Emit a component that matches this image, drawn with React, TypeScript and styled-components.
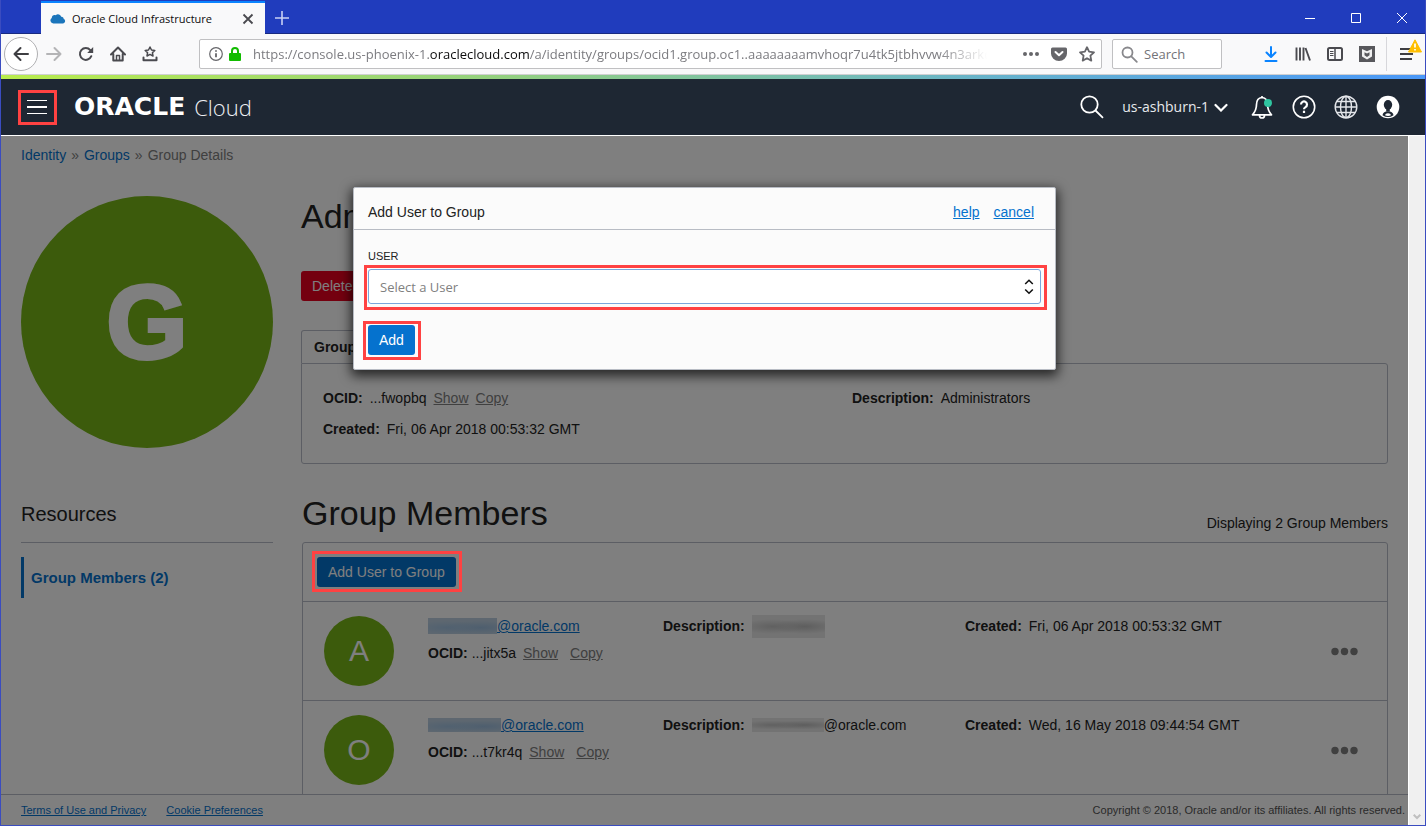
import React from "react";
import styled, { createGlobalStyle, css } from "styled-components";

const ui = `"Open Sans", "Noto Sans", sans-serif`;
const arial = `"Liberation Sans", Arial, sans-serif`;

const GlobalStyle = createGlobalStyle`
  *, *::before, *::after { box-sizing: border-box; }
  body { margin: 0; font: 14px/20px ${arial}; color: #222; background: #fff; }
  button, input, select { font: inherit; color: inherit; margin: 0; }
  svg { display: block; flex: none; }
`;

/* ---------- window ---------- */
const Window = styled.div`
  display: flex;
  flex-direction: column;
  height: 100vh;
  border: solid #3a4cc0;
  border-width: 0 1px 1px;
  overflow: hidden;
`;

const TitleBar = styled.div`
  display: flex;
  height: 34px;
  padding: 1px 0 0 40px;
  background: #203cbd;
  box-shadow: inset 0 -1px #182a80;
  flex: none;
`;

const Tab = styled.div`
  display: flex;
  align-items: center;
  gap: 6px;
  width: 224px;
  padding: 0 10px 0 9px;
  border-top: 2px solid #0a84ff;
  background: #f9f9fa;
  color: #0c0c0d;
  font: 11px/16px ${ui};
`;

const TabTitle = styled.span`
  flex: 1;
  white-space: nowrap;
`;

const BareButton = styled.button`
  display: flex;
  align-items: center;
  justify-content: center;
  padding: 0;
  border: 0;
  background: none;
  color: inherit;
`;

const NewTab = styled(BareButton)`
  width: 34px;
`;

const WindowButtons = styled.div`
  display: flex;
  margin-left: auto;
`;

const WindowButton = styled(BareButton)`
  width: 46px;
`;

const NavBar = styled.div`
  display: flex;
  align-items: center;
  height: 41px;
  padding: 0 3px;
  border-bottom: 1px solid #d0d0d2;
  background: #f9f9fa;
  color: #4a4a4f;
  flex: none;
`;

const NavButton = styled(BareButton)`
  width: 32px;
  height: 32px;
`;

const BackButton = styled(BareButton)`
  width: 34px;
  height: 34px;
  border: 1px solid #b0b0b2;
  border-radius: 50%;
  background: #fff;
`;

const Field = styled.div`
  display: flex;
  align-items: center;
  height: 30px;
  border: 1px solid #c0c0c2;
  border-radius: 2px;
  background: #fff;
  font: 13px/20px ${ui};
`;

const UrlField = styled(Field)`
  flex: 1;
  min-width: 0;
  gap: 6px;
  margin: 0 10px 0 33px;
  padding: 0 6px 0 9px;
`;

const Url = styled.div`
  flex: 1;
  min-width: 0;
  margin: 0 30px 0 6px;
  overflow: hidden;
  white-space: nowrap;
  color: #7c7c80;
  mask-image: linear-gradient(to right, #000 calc(100% - 50px), transparent);
  b { font-weight: 400; color: #0c0c0d; }
`;

const UrlActions = styled.div`
  display: flex;
  align-items: center;
  gap: 12px;
  color: #66666a;
`;

const SearchField = styled(Field)`
  width: 110px;
  gap: 6px;
  margin-right: 33px;
  padding: 0 8px;
  color: #737378;
`;

const SearchInput = styled.input`
  width: 100%;
  min-width: 0;
  padding: 0;
  border: 0;
  outline: 0;
  background: none;
  &::placeholder { color: #737378; opacity: 1; }
`;

const MenuSlot = styled.div`
  position: relative;
  display: flex;
  align-items: center;
  justify-content: center;
  width: 36px;
  height: 34px;
  margin-left: 3px;
  padding-left: 3px;
  border-left: 1px solid #d7d7db;
`;

const MenuBadge = styled.span`
  position: absolute;
  top: 2px;
  right: 0;
`;

/* ---------- console header ---------- */
const Stripe = styled.div`
  height: 4px;
  background: linear-gradient(to right, #b9ec4d, #93d07f 35%, #66b2cc 70%, #4a98f8);
  flex: none;
`;

const Header = styled.header`
  display: flex;
  align-items: center;
  height: 57px;
  padding: 0 25px 0 20px;
  border-bottom: 1px solid #fff;
  background: #1e2733;
  color: #fff;
  flex: none;
`;

const Marked = styled.div`
  position: relative;
  display: flex;
`;

const Mark = styled.span<{ $inset: string }>`
  position: absolute;
  z-index: 3;
  inset: ${(p) => p.$inset};
  border: 3px solid #ff4242;
  pointer-events: none;
`;

const MenuButton = styled(BareButton)`
  width: 33px;
  height: 29px;
`;

const Logo = styled.a`
  display: flex;
  align-items: center;
  gap: 9px;
  margin-left: 20px;
  color: #fff;
  text-decoration: none;
  line-height: 28px;
`;

const LogoStrong = styled.span`
  font-family: "DejaVu Sans", sans-serif;
  font-weight: 700;
  font-size: 25px;
`;

const LogoLight = styled.span`
  font-family: ${ui};
  font-weight: 300;
  font-size: 22px;
  color: #eef0f3;
`;

const HeaderTools = styled.div`
  display: flex;
  align-items: center;
  gap: 18px;
  margin-left: auto;
`;

const Region = styled(BareButton)`
  gap: 5px;
  margin-right: 4px;
  padding-bottom: 1px;
  font: 14px/20px ${ui};
  color: #e8eaed;
`;

/* ---------- page ---------- */
const Viewport = styled.div`
  display: flex;
  flex: 1;
  min-height: 0;
`;

const Screen = styled.div`
  position: relative;
  display: flex;
  flex-direction: column;
  flex: 1;
  min-width: 0;
`;

const Scrollbar = styled.div`
  display: flex;
  align-items: flex-end;
  justify-content: center;
  width: 17px;
  padding-bottom: 5px;
  border-left: 1px solid #fff;
  background: #f0f0f0;
`;

const Page = styled.div`
  flex: 1;
  min-height: 0;
  padding: 9px 20px 0;
  overflow: hidden;
`;

const Link = styled.a<{ $muted?: boolean }>`
  color: ${(p) => (p.$muted ? "#808080" : "#0572ce")};
`;

const Crumbs = styled.nav`
  display: flex;
  gap: 5px;
  color: #808080;
  a { text-decoration: none; }
`;

const Columns = styled.div`
  display: flex;
  gap: 28px;
  padding-top: 31px;
`;

const Side = styled.aside`
  width: 252px;
  flex: none;
`;

const Avatar = styled.div<{ $large?: boolean }>`
  display: flex;
  align-items: center;
  justify-content: center;
  border-radius: 50%;
  background: #78b618;
  color: #fff;
  ${(p) =>
    p.$large
      ? css`
          width: 252px;
          height: 252px;
          font: 700 104px/104px ${arial};
          -webkit-text-stroke: 4px #fff;
        `
      : css`
          width: 70px;
          height: 70px;
          font-size: 30px;
          line-height: 32px;
        `}
`;

const SideTitle = styled.h3`
  margin: 54px 0 0;
  padding-bottom: 16px;
  border-bottom: 1px solid #b8bcc8;
  font-weight: 400;
  font-size: 20px;
  line-height: 24px;
`;

const SideItem = styled.a`
  display: block;
  margin-top: 14px;
  padding: 10px 7px;
  border-left: 3px solid #0572ce;
  color: #0572ce;
  font-weight: 700;
  font-size: 15px;
  line-height: 21px;
  text-decoration: none;
`;

const Main = styled.main`
  flex: 1;
  min-width: 0;
`;

const Title = styled.h1`
  margin: 0;
  font-weight: 400;
  font-size: 34px;
  line-height: 40px;
`;

const Button = styled.button<{ $danger?: boolean }>`
  height: 30px;
  padding: 0 11px;
  border: 0;
  border-radius: 3px;
  background: ${(p) => (p.$danger ? "#e8001f" : "#0572ce")};
  color: #fff;
  line-height: 20px;
`;

const Actions = styled.div`
  display: flex;
  padding: 35px 0 29px;
`;

const InfoTab = styled.div`
  width: 150px;
  height: 33px;
  padding: 6px 12px;
  border: 1px solid #b8bcc8;
  border-bottom: 0;
  border-radius: 3px 3px 0 0;
  font-weight: 700;
`;

const InfoBox = styled.dl`
  display: grid;
  grid-template-columns: 1fr 1fr;
  gap: 11px 0;
  margin: 0;
  padding: 24px 6px 24px 21px;
  border: 1px solid #b8bcc8;
  border-radius: 0 3px 3px 3px;
`;

const Pair = styled.div`
  display: flex;
  gap: 7px;
  white-space: nowrap;
  dt { font-weight: 700; }
  dd { display: flex; gap: 7px; margin: 0; }
`;

const Members = styled.section`
  padding: 29px 0 0 1px;
`;

const MembersHead = styled.div`
  display: flex;
  align-items: flex-end;
  justify-content: space-between;
  padding-bottom: 9px;
`;

const MemberList = styled.div`
  border: 1px solid #b8bcc8;
  border-radius: 3px;
`;

const Toolbar = styled.div`
  display: flex;
  padding: 14px;
`;

const Row = styled.article`
  display: grid;
  grid-template-columns: 70px 201fr 268fr 332fr auto;
  gap: 34px;
  padding: 14px 29px 14px 21px;
  border-top: 1px solid #b8bcc8;
  white-space: nowrap;
`;

const Cell = styled.div`
  display: flex;
  flex-direction: column;
  gap: 7px;
  b { font-weight: 700; }
`;

const Line = styled.div<{ $wide?: boolean }>`
  display: flex;
  gap: ${(p) => (p.$wide ? 7 : 4)}px;
`;

const Email = styled.div`
  display: flex;
  align-items: center;
  height: 20px;
`;

const Smudge = styled.span<{ $w: number; $h: number; $gray?: boolean }>`
  display: block;
  width: ${(p) => p.$w}px;
  height: ${(p) => p.$h}px;
  background: ${(p) =>
    p.$gray
      ? css`radial-gradient(ellipse at 28% 50%, #c2c2c2, transparent 45%), radial-gradient(ellipse at 72% 50%, #bcbcbc, transparent 45%), #e6e6e6`
      : css`radial-gradient(ellipse at 28% 60%, #a2c2e0, transparent 50%), radial-gradient(ellipse at 76% 60%, #9cbddd, transparent 50%), #bccfe0`};
`;

const OcidLinks = styled.span`
  display: flex;
  gap: 12px;
  margin-left: 3px;
`;

const MoreButton = styled(BareButton)`
  align-self: center;
`;

const Footer = styled.footer`
  display: flex;
  gap: 20px;
  padding: 5px 3px 5px 20px;
  border-top: 1px solid #b8bcc8;
  font-size: 11px;
  line-height: 20px;
  color: #555;
  span { margin-left: auto; }
`;

/* ---------- dialog ---------- */
const Backdrop = styled.div`
  position: absolute;
  inset: 0;
  z-index: 2;
  display: flex;
  justify-content: center;
  align-items: flex-start;
  padding-top: 51px;
  background: rgba(0, 0, 0, 0.5);
`;

const Dialog = styled.section`
  width: 703px;
  border: 1px solid #b8bcc4;
  border-radius: 2px;
  background: #fbfbfb;
  box-shadow: 0 4px 12px 2px rgba(0, 0, 0, 0.7);
`;

const DialogHead = styled.div`
  display: flex;
  gap: 14px;
  padding: 14px 21px 7px 14px;
  border-bottom: 1px solid #b8bcc4;
  h2 { flex: 1; margin: 0; font-size: 14px; font-weight: 400; }
`;

const DialogBody = styled.form`
  padding: 18px 14px 14px;
`;

const Label = styled.label`
  display: block;
  margin-bottom: 5px;
  font-size: 11px;
  line-height: 16px;
`;

const SelectWrap = styled(Marked)`
  margin-bottom: 21px;
`;

const Select = styled.select`
  appearance: none;
  width: 100%;
  height: 35px;
  padding: 0 11px;
  border: 1px solid #7aa7dc;
  border-radius: 3px;
  background: #fff;
  color: #808080;
  font: 13px/20px ${ui};
`;

const SelectArrow = styled.svg`
  position: absolute;
  top: 10px;
  right: 7px;
  pointer-events: none;
`;

const AddRow = styled.div`
  display: flex;
`;

const Dots = () => (
  <svg width="27" height="9" viewBox="0 0 27 9" fill="#808080">
    <circle cx="4" cy="4.500" r="3.700" />
    <circle cx="13.500" cy="4.500" r="3.700" />
    <circle cx="23" cy="4.500" r="3.700" />
  </svg>
);

type Member = {
  letter: string;
  mask: [number, number];
  descMask: [number, number];
  desc: string;
  ocid: string;
  created: string;
};

const members: Member[] = [
  { letter: "A", mask: [69, 16], descMask: [73, 23], desc: "", ocid: "...jitx5a", created: "Fri, 06 Apr 2018 00:53:32 GMT" },
  { letter: "O", mask: [73, 14], descMask: [72, 14], desc: "@oracle.com", ocid: "...t7kr4q", created: "Wed, 16 May 2018 09:44:54 GMT" },
];

export default function App() {
  return (
    <Window>
      <GlobalStyle />
      <TitleBar>
        <Tab>
          <svg width="16" height="16" viewBox="0 0 16 16">
            <path d="M3.300 12.500a3 3 0 0 1-1.500-5.500C1.600 5 3.600 3.300 5.700 4.200 7.500 2.600 10.500 3.300 11.200 5.800c1.500-.2 2.400.9 2.500 2.100 2 .6 2 4.200-.6 4.600z" fill="#1b75bb" />
          </svg>
          <TabTitle>Oracle Cloud Infrastructure</TabTitle>
          <BareButton aria-label="Close tab">
            <svg width="14" height="14" viewBox="0 0 14 14" stroke="#4a4a4f" strokeWidth="1.800">
              <path d="M2.500 2.500l9 9M11.500 2.500l-9 9" />
            </svg>
          </BareButton>
        </Tab>
        <NewTab aria-label="New tab">
          <svg width="14" height="14" viewBox="0 0 14 14" stroke="#c8d0f4" strokeWidth="1.600">
            <path d="M7 0v14M0 7h14" />
          </svg>
        </NewTab>
        <WindowButtons>
          <WindowButton aria-label="Minimize">
            <svg width="10" height="10" stroke="#fff"><path d="M0 5.500h10" /></svg>
          </WindowButton>
          <WindowButton aria-label="Maximize">
            <svg width="10" height="10" stroke="#fff" fill="none"><path d="M.5 .5h9v9h-9z" /></svg>
          </WindowButton>
          <WindowButton aria-label="Close window">
            <svg width="10" height="10" stroke="#fff"><path d="M0 0l10 10M10 0L0 10" /></svg>
          </WindowButton>
        </WindowButtons>
      </TitleBar>

      <NavBar>
        <BackButton aria-label="Back">
          <svg width="16" height="16" viewBox="0 0 16 16" fill="none" stroke="#3e3e42" strokeWidth="2" strokeLinecap="round" strokeLinejoin="round">
            <path d="M15 8H1.500M7.500 2L1.500 8l6 6" />
          </svg>
        </BackButton>
        <NavButton aria-label="Forward">
          <svg width="16" height="16" viewBox="0 0 16 16" fill="none" stroke="#b4b4b6" strokeWidth="2" strokeLinecap="round" strokeLinejoin="round">
            <path d="M1 8h13.500M8.500 2l6 6-6 6" />
          </svg>
        </NavButton>
        <NavButton aria-label="Reload">
          <svg width="16" height="16" viewBox="0 0 16 16">
            <path d="M13.300 10.200A5.900 5.900 0 1 1 12.300 4.100" fill="none" stroke="#4a4a4f" strokeWidth="2" strokeLinecap="round" />
            <path d="M15.200 1v6H9.200z" fill="#4a4a4f" />
          </svg>
        </NavButton>
        <NavButton aria-label="Home">
          <svg width="16" height="16" viewBox="0 0 16 16" fill="none" stroke="#4a4a4f" strokeWidth="2" strokeLinecap="round" strokeLinejoin="round">
            <path d="M1 8.500L8 1.500l7 7M3.300 8v6.500h9.400V8" />
            <path d="M6.500 14V9.500h3V14" strokeWidth="1.500" />
          </svg>
        </NavButton>
        <NavButton aria-label="Bookmarks">
          <svg width="16" height="16" viewBox="0 0 16 16" fill="none" stroke="#4a4a4f" strokeLinejoin="round" strokeLinecap="round">
            <path d="M8 1l1.500 3 3.300.4-2.400 2.300.6 3.300-3-1.600-3 1.600.6-3.300L3.200 4.400 6.500 4z" strokeWidth="1.500" />
            <path d="M1.500 11.500v2.700h13v-2.700" strokeWidth="2" />
          </svg>
        </NavButton>
        <UrlField>
          <svg width="14" height="14" viewBox="0 0 14 14" fill="none" stroke="#66666a">
            <circle cx="7" cy="7" r="6.300" strokeWidth="1.200" />
            <path d="M7 6.200v4M7 3.300v1.500" strokeWidth="1.800" />
          </svg>
          <svg width="12" height="14" viewBox="0 0 12 14">
            <rect x="0" y="6" width="12" height="8" rx="1" fill="#12bc00" />
            <path d="M3 7V4a3 3 0 0 1 6 0v3" fill="none" stroke="#12bc00" strokeWidth="2" />
          </svg>
          <Url role="textbox" aria-label="Address" tabIndex={0}>
            https://console.us-phoenix-1.<b>oraclecloud.com</b>/a/identity/groups/ocid1.group.oc1..aaaaaaaamvhoqr7u4tk5jtbhvvw4n3arkq
          </Url>
          <UrlActions>
            <BareButton aria-label="Page actions">
              <svg width="16" height="16" viewBox="0 0 16 16" fill="#66666a">
                <circle cx="2" cy="8" r="2" /><circle cx="8" cy="8" r="2" /><circle cx="14" cy="8" r="2" />
              </svg>
            </BareButton>
            <BareButton aria-label="Save to Pocket">
              <svg width="16" height="16" viewBox="0 0 16 16">
                <path d="M1.500 1.500h13A1.500 1.500 0 0 1 16 3v4.500a8 7.500 0 0 1-16 0V3a1.500 1.500 0 0 1 1.500-1.500z" fill="#66666a" />
                <path d="M4.500 6L8 9.300 11.500 6" fill="none" stroke="#fff" strokeWidth="2" strokeLinecap="round" strokeLinejoin="round" />
              </svg>
            </BareButton>
            <BareButton aria-label="Bookmark this page">
              <svg width="16" height="16" viewBox="0 0 16 16" fill="none" stroke="#66666a" strokeWidth="1.800" strokeLinejoin="round">
                <path d="M8 1.200l2.100 4.500 4.900.6-3.600 3.400.9 4.900L8 12.200l-4.300 2.400.9-4.900L1 6.300l4.900-.6z" />
              </svg>
            </BareButton>
          </UrlActions>
        </UrlField>
        <SearchField>
          <svg width="17" height="17" viewBox="0 0 17 17" fill="none" stroke="#88888c" strokeWidth="1.800" strokeLinecap="round">
            <circle cx="6.500" cy="6.500" r="5" /><path d="M10.300 10.300l5.500 5.500" />
          </svg>
          <SearchInput aria-label="Search the web" placeholder="Search" />
        </SearchField>
        <NavButton aria-label="Downloads">
          <svg width="16" height="16" viewBox="0 0 16 16" fill="none" stroke="#0a84ff" strokeWidth="2" strokeLinecap="round" strokeLinejoin="round">
            <path d="M8 1v9.500M3.500 6.500L8 11l4.500-4.500M2.500 15h11" />
          </svg>
        </NavButton>
        <NavButton aria-label="Library">
          <svg width="16" height="16" viewBox="0 0 16 16" fill="none" stroke="#4a4a4f" strokeWidth="1.900">
            <path d="M1.500 1.500v13M5 1.500v13M8.500 1.500v13M10.500 2l4.500 12.500" />
          </svg>
        </NavButton>
        <NavButton aria-label="Sidebars">
          <svg width="16" height="16" viewBox="0 0 16 16" fill="none" stroke="#4a4a4f">
            <rect x="1" y="2" width="14" height="12" rx="1.500" strokeWidth="2" />
            <path d="M8 2v12" strokeWidth="1.500" /><path d="M3 5.500h3.500M3 7.500h3.500M3 9.500h3.500" />
          </svg>
        </NavButton>
        <NavButton aria-label="McAfee">
          <svg width="16" height="16" viewBox="0 0 16 16">
            <path d="M0 0h16v16H0z" fill="#58585c" />
            <path d="M3 3l5 2.300L13 3v7.500l-5 3-5-3z" fill="#f0f0f0" />
            <path d="M5.500 6.300L8 7.500l2.500-1.200v3L8 11 5.500 9.300z" fill="#58585c" />
          </svg>
        </NavButton>
        <MenuSlot>
          <BareButton aria-label="Open menu">
            <svg width="13" height="14" viewBox="0 0 13 14" stroke="#3e3e42" strokeWidth="2">
              <path d="M0 2h12M0 7h13M0 12h12" />
            </svg>
          </BareButton>
          <MenuBadge>
            <svg width="14" height="14" viewBox="0 0 14 14">
              <path d="M7 .8L13.500 13H.5z" fill="#ffbf00" stroke="#ffbf00" strokeLinejoin="round" />
              <path d="M7 4.500v4M7 10v1.600" stroke="#fff" strokeWidth="1.700" />
            </svg>
          </MenuBadge>
        </MenuSlot>
      </NavBar>

      <Stripe />
      <Header>
        <Marked>
          <MenuButton aria-label="Navigation menu">
            <svg width="21" height="16" viewBox="0 0 21 16" stroke="#fff">
              <path d="M0 1.500h20M0 14.500h20" /><path d="M0 8h20" strokeWidth="2" />
            </svg>
          </MenuButton>
          <Mark $inset="-3px" />
        </Marked>
        <Logo href="#">
          <LogoStrong>ORACLE</LogoStrong>
          <LogoLight>Cloud</LogoLight>
        </Logo>
        <HeaderTools>
          <BareButton aria-label="Search">
            <svg width="24" height="24" viewBox="0 0 24 24" fill="none" stroke="#fff" strokeWidth="1.800" strokeLinecap="round">
              <circle cx="9.500" cy="9.500" r="8.200" /><path d="M15.500 15.500l7 6.800" />
            </svg>
          </BareButton>
          <Region>
            us-ashburn-1
            <svg width="14" height="10" viewBox="0 0 14 10" fill="none" stroke="#fff" strokeWidth="2.200" strokeLinecap="round">
              <path d="M1.500 3L7 8.500l5.500-5.500" />
            </svg>
          </Region>
          <BareButton aria-label="Announcements">
            <svg width="24" height="24" viewBox="0 0 24 24" fill="none" stroke="#fff" strokeWidth="1.700" strokeLinejoin="round">
              <path d="M12 2.500c-4 .5-5.500 3.500-5.500 7 0 5-1.500 7.500-4 10.300h19c-2.500-2.800-4-5.300-4-10.300 0-3.500-1.500-6.500-5.500-7zM9.500 20.500a2.500 2.500 0 0 0 5 0M12 1v1.500" />
              <circle cx="18" cy="8" r="4" fill="#2fc4a0" stroke="none" />
            </svg>
          </BareButton>
          <BareButton aria-label="Help">
            <svg width="24" height="24" viewBox="0 0 24 24" fill="none" stroke="#fff">
              <circle cx="12" cy="12" r="10.700" strokeWidth="1.600" />
              <path d="M9 9.500a3 3 0 1 1 4.500 2.600c-1 .6-1.500 1-1.500 2.200" strokeWidth="2.200" />
              <path d="M12 15.700v2.300" strokeWidth="2.200" />
            </svg>
          </BareButton>
          <BareButton aria-label="Language">
            <svg width="24" height="24" viewBox="0 0 24 24" fill="none" stroke="#e4e6ea" strokeWidth="1.400">
              <circle cx="12" cy="12" r="10.800" /><ellipse cx="12" cy="12" rx="5.500" ry="10.800" />
              <path d="M12 1v22M1 12h22M2.800 6.500h18.400M2.800 17.500h18.400" />
            </svg>
          </BareButton>
          <BareButton aria-label="Profile">
            <svg width="24" height="24" viewBox="0 0 24 24">
              <circle cx="12" cy="12" r="11.300" fill="#fff" />
              <ellipse cx="12" cy="9.800" rx="4.200" ry="4.800" fill="#1e2733" />
              <path d="M10.200 13h3.600v3.500h-3.600z" fill="#1e2733" />
              <path d="M6.500 20.200c.3-2.500 2.500-4 5.500-4s5.200 1.500 5.500 4a9.800 9.800 0 0 1-11 0z" fill="#1e2733" />
              <path d="M9 20.200c.3-1.300 1.400-2 3-2s2.700.7 3 2a7 7 0 0 1-6 0z" fill="#fff" />
            </svg>
          </BareButton>
        </HeaderTools>
      </Header>

      <Viewport>
        <Screen>
          <Page>
            <Crumbs>
              <Link href="#">Identity</Link>»<Link href="#">Groups</Link>»<span>Group Details</span>
            </Crumbs>
            <Columns>
              <Side>
                <Avatar $large>G</Avatar>
                <SideTitle>Resources</SideTitle>
                <SideItem href="#">Group Members (2)</SideItem>
              </Side>
              <Main>
                <Title>Administrators</Title>
                <Actions>
                  <Button $danger>Delete</Button>
                </Actions>
                <InfoTab>Group Information</InfoTab>
                <InfoBox>
                  <Pair>
                    <dt>OCID:</dt>
                    <dd>
                      <span>...fwopbq</span>
                      <Link $muted href="#">Show</Link>
                      <Link $muted href="#">Copy</Link>
                    </dd>
                  </Pair>
                  <Pair>
                    <dt>Description:</dt>
                    <dd>Administrators</dd>
                  </Pair>
                  <Pair>
                    <dt>Created:</dt>
                    <dd>Fri, 06 Apr 2018 00:53:32 GMT</dd>
                  </Pair>
                </InfoBox>
                <Members>
                  <MembersHead>
                    <Title as="h2">Group Members</Title>
                    <span>Displaying 2 Group Members</span>
                  </MembersHead>
                  <MemberList>
                    <Toolbar>
                      <Marked>
                        <Button>Add User to Group</Button>
                        <Mark $inset="-6px -6px -5px -5px" />
                      </Marked>
                    </Toolbar>
                    {members.map((m) => (
                      <Row key={m.letter}>
                        <Avatar>{m.letter}</Avatar>
                        <Cell>
                          <Email>
                            <Smudge $w={m.mask[0]} $h={m.mask[1]} />
                            <Link href="#">@oracle.com</Link>
                          </Email>
                          <Line>
                            <b>OCID:</b>
                            <span>{m.ocid}</span>
                            <OcidLinks>
                              <Link $muted href="#">Show</Link>
                              <Link $muted href="#">Copy</Link>
                            </OcidLinks>
                          </Line>
                        </Cell>
                        <Cell>
                          <Line $wide>
                            <b>Description:</b>
                            <Email>
                              <Smudge $gray $w={m.descMask[0]} $h={m.descMask[1]} />
                              {m.desc}
                            </Email>
                          </Line>
                        </Cell>
                        <Cell>
                          <Line $wide>
                            <b>Created:</b>
                            <span>{m.created}</span>
                          </Line>
                        </Cell>
                        <MoreButton aria-label="Actions">
                          <Dots />
                        </MoreButton>
                      </Row>
                    ))}
                  </MemberList>
                </Members>
              </Main>
            </Columns>
          </Page>
          <Footer>
            <Link href="#">Terms of Use and Privacy</Link>
            <Link href="#">Cookie Preferences</Link>
            <span>Copyright © 2018, Oracle and/or its affiliates. All rights reserved.</span>
          </Footer>
          <Backdrop>
            <Dialog role="dialog" aria-labelledby="dialog-title">
              <DialogHead>
                <h2 id="dialog-title">Add User to Group</h2>
                <Link href="#">help</Link>
                <Link href="#">cancel</Link>
              </DialogHead>
              <DialogBody>
                <Label htmlFor="user">USER</Label>
                <SelectWrap>
                  <Select id="user" defaultValue="">
                    <option value="">Select a User</option>
                  </Select>
                  <SelectArrow width="10" height="16" viewBox="0 0 10 16" fill="none" stroke="#111" strokeWidth="1.600">
                    <path d="M1.200 5L5 1.300 8.800 5M1.200 10.500L5 14.200l3.800-3.700" />
                  </SelectArrow>
                  <Mark $inset="-4px -6px -6px -4px" />
                </SelectWrap>
                <AddRow>
                  <Marked>
                    <Button type="button">Add</Button>
                    <Mark $inset="-4px -6px -5px -5px" />
                  </Marked>
                </AddRow>
              </DialogBody>
            </Dialog>
          </Backdrop>
        </Screen>
        <Scrollbar>
          <svg width="8" height="6" viewBox="0 0 8 6" fill="none" stroke="#bfbfbf" strokeWidth="2">
            <path d="M.7 .7L4 4l3.300-3.300" />
          </svg>
        </Scrollbar>
      </Viewport>
    </Window>
  );
}
